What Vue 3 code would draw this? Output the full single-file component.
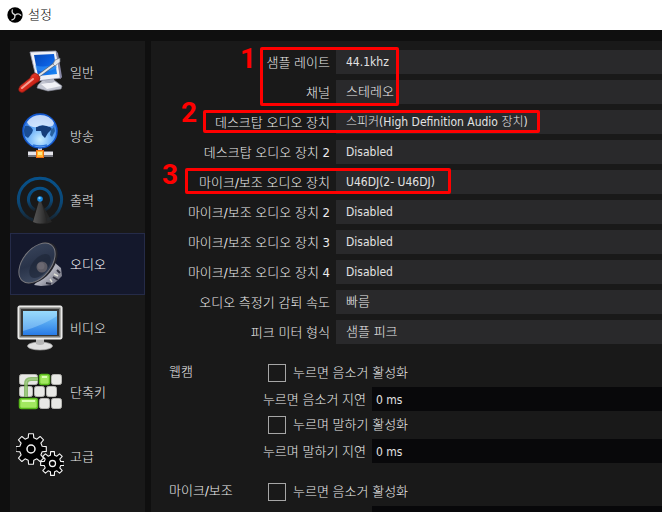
<script setup>
import { ref } from 'vue'

const menu = [
  { id: 'general', label: '일반' },
  { id: 'stream', label: '방송' },
  { id: 'output', label: '출력' },
  { id: 'audio', label: '오디오' },
  { id: 'video', label: '비디오' },
  { id: 'hotkeys', label: '단축키' },
  { id: 'advanced', label: '고급' },
]
const active = ref('audio')

const devices = ref([
  { id: 'rate', label: '샘플 레이트', value: '44.1khz' },
  { id: 'channels', label: '채널', value: '스테레오' },
  { id: 'desktop1', label: '데스크탑 오디오 장치', value: '스피커(High Definition Audio 장치)' },
  { id: 'desktop2', label: '데스크탑 오디오 장치 2', value: 'Disabled' },
  { id: 'mic1', label: '마이크/보조 오디오 장치', value: 'U46DJ(2- U46DJ)' },
  { id: 'mic2', label: '마이크/보조 오디오 장치 2', value: 'Disabled' },
  { id: 'mic3', label: '마이크/보조 오디오 장치 3', value: 'Disabled' },
  { id: 'mic4', label: '마이크/보조 오디오 장치 4', value: 'Disabled' },
  { id: 'decay', label: '오디오 측정기 감퇴 속도', value: '빠름' },
  { id: 'peak', label: '피크 미터 형식', value: '샘플 피크' },
])

const sources = ref([
  { id: 'webcam', label: '웹캠', mute: false, muteDelay: '0 ms', talk: false, talkDelay: '0 ms' },
  { id: 'aux', label: '마이크/보조', mute: false, muteDelay: '0 ms', talk: false, talkDelay: '0 ms' },
])

// values without any latin text use the label size
const isHangul = (text) => /^[가-힣 ]+$/.test(text)

// 8-tooth gear outline centred on 0,0
function gear(outer, inner) {
  const pts = []
  for (let i = 0; i < 8; i++) {
    const a = i * 45
    for (const [d, r] of [[-14, inner], [-9, outer], [9, outer], [14, inner]]) {
      const t = ((a + d) * Math.PI) / 180
      pts.push(`${(r * Math.sin(t)).toFixed(2)},${(-r * Math.cos(t)).toFixed(2)}`)
    }
  }
  return pts.join(' ')
}
</script>

<template>
  <div class="window">
    <header class="titlebar">
      <svg class="logo" viewBox="0 0 16 16" aria-hidden="true">
        <circle cx="8" cy="8" r="7.7" fill="#000" />
        <g fill="none" stroke="#d8d8d8" stroke-width="1.3" stroke-linecap="round">
          <path d="M7.8 7.6C5.6 7 4.6 5.2 5.3 2.9" />
          <path d="M7.8 7.6C5.6 7 4.6 5.2 5.3 2.9" transform="rotate(120 8 8)" />
          <path d="M7.8 7.6C5.6 7 4.6 5.2 5.3 2.9" transform="rotate(240 8 8)" />
        </g>
      </svg>
      <h1>설정</h1>
    </header>

    <div class="body">
      <nav class="sidebar">
        <button
          v-for="item in menu"
          :key="item.id"
          type="button"
          class="menu-item"
          :class="{ active: active === item.id }"
          @click="active = item.id"
        >
          <svg class="icon" viewBox="0 0 48 48" aria-hidden="true">
            <template v-if="item.id === 'general'">
              <defs>
                <linearGradient id="gScreen" x1="0" y1="0" x2="1" y2="1">
                  <stop offset="0" stop-color="#0648b8" /><stop offset=".5" stop-color="#0b5fe0" /><stop offset="1" stop-color="#1f8cf5" />
                </linearGradient>
                <linearGradient id="gHandle" x1="0" y1="0" x2="1" y2="1">
                  <stop offset="0" stop-color="#f0685a" /><stop offset=".5" stop-color="#d92a1c" /><stop offset="1" stop-color="#8c0e08" />
                </linearGradient>
              </defs>
              <path d="M22 37L27 32L38 32L46 38L45 41L32 43L21 40Z" fill="#c2c5d0" stroke="#8c8f9c" stroke-width=".6" />
              <path d="M25 36L39 34L45 38L31 41Z" fill="#f1f2f6" />
              <path d="M28 30L38 29L38 34Q33 36 29 34Z" fill="#b4b7c4" />
              <path d="M14 4L40 3L45 30L21 33Z" fill="#f0f1f7" stroke="#9799ad" stroke-width=".8" />
              <path d="M40 3L42 5L46 29L44 31Z" fill="#8788a6" />
              <path d="M18 7L38 6L41 26L22 28Z" fill="url(#gScreen)" />
              <path d="M19 17Q29 21 40 15L41 20Q30 26 20 22Z" fill="#3aa0ff" opacity=".5" />
              <path d="M21 29L40 15" stroke="#5f6673" stroke-width="3.4" />
              <path d="M21 29L40 15" stroke="#e4e7ec" stroke-width="2" />
              <path d="M37 16L39 12L44 10L44 14L39 18Z" fill="#e4e7ec" stroke="#6e7480" stroke-width=".7" />
              <path d="M4 38L14 30Q15 26 19 25Q23 26 24 30Q24 34 20 35L9 43Q6 46 3 43Q2 41 4 38Z" fill="url(#gHandle)" stroke="#80120c" stroke-width=".6" />
              <path d="M6 40L17 31" stroke="#ffc3b8" stroke-width="2" stroke-linecap="round" opacity=".75" />
            </template>

            <template v-else-if="item.id === 'stream'">
              <defs>
                <radialGradient id="gGlobe" cx=".5" cy=".75" r=".75">
                  <stop offset="0" stop-color="#c9edff" /><stop offset=".5" stop-color="#68adf8" /><stop offset="1" stop-color="#1661dc" />
                </radialGradient>
              </defs>
              <path d="M24 34V42" stroke="#d4d4dc" stroke-width="4" />
              <path d="M12 42H37" stroke="#77777f" stroke-width="6" />
              <path d="M12 41.5H37" stroke="#e4e4ea" stroke-width="3" />
              <rect x="20.5" y="38.5" width="7" height="7" fill="#ffb52e" stroke="#ed6d14" />
              <rect x="22" y="40" width="4" height="3" fill="#ffe68a" />
              <circle cx="24" cy="19" r="17" fill="url(#gGlobe)" stroke="#1357cd" stroke-width="1.5" />
              <path d="M9 14Q14 13 17 18L16 21L12 26L9 24Q7 19 9 14Z" fill="#1a4d94" />
              <path d="M20 15L27 13L34 15L36 17L32 21L29 26L26 23L25 19L20 19Z" fill="#143c7a" />
              <path d="M35 18L38 15L39 19L36 25L34 23Z" fill="#27609f" />
              <path d="M11 10Q16 3 24 3Q34 3 38 11Q37 16 31 14Q24 12 21 15Q13 16 11 10Z" fill="#edf4ff" opacity=".78" />
              <path d="M17 33Q24 35 31 33" stroke="#2f78dc" stroke-width="1.5" fill="none" />
            </template>

            <template v-else-if="item.id === 'output'">
              <defs>
                <linearGradient id="gWave" x1="0" y1="0" x2="0" y2="1">
                  <stop offset="0" stop-color="#07518a" /><stop offset=".6" stop-color="#0b4775" /><stop offset="1" stop-color="#172531" />
                </linearGradient>
                <linearGradient id="gCone" x1="0" y1="0" x2="1" y2="0">
                  <stop offset="0" stop-color="#555" /><stop offset=".5" stop-color="#414141" /><stop offset="1" stop-color="#252525" />
                </linearGradient>
              </defs>
              <g fill="none" stroke="url(#gWave)" stroke-width="3">
                <path d="M17 44A21.5 21.5 0 1 1 31 44" />
                <path d="M19 34A11.5 11.5 0 1 1 29 34" />
              </g>
              <path d="M24 24L36 46Q27 50 17 46Z" fill="#292929" opacity=".8" />
              <path d="M23 25H25L31 46Q24 49 17 46Z" fill="url(#gCone)" />
              <circle cx="24" cy="23" r="2.8" fill="#1688df" />
              <circle cx="23.5" cy="22" r="1.2" fill="#79cdff" />
            </template>

            <template v-else-if="item.id === 'audio'">
              <defs>
                <linearGradient id="gHorn" x1="0" y1="0" x2="1" y2="1">
                  <stop offset="0" stop-color="#3b475e" /><stop offset=".5" stop-color="#293349" /><stop offset="1" stop-color="#46536a" />
                </linearGradient>
                <linearGradient id="gMagnet" x1="0" y1="0" x2="1" y2="1">
                  <stop offset="0" stop-color="#777987" /><stop offset=".5" stop-color="#b2b3be" /><stop offset="1" stop-color="#565766" />
                </linearGradient>
              </defs>
              <path d="M38 22L45 28L46 36L41 41L36 45L25 46L18 45Z" fill="url(#gMagnet)" />
              <path d="M41 30L44 33M37 37L42 40M30 43L35 44" stroke="#30313f" stroke-width="2" />
              <path d="M38 34L42 36M34 39L36 42" stroke="#deded5" stroke-width="1.5" />
              <ellipse cx="22.5" cy="23" rx="15" ry="24" transform="rotate(39 22.5 23)" fill="#24242b" />
              <ellipse cx="21" cy="23" rx="14" ry="23" transform="rotate(39 21 23)" fill="url(#gHorn)" stroke="#77777d" />
              <ellipse cx="24" cy="26" rx="8" ry="14" transform="rotate(39 24 26)" fill="#1d2435" opacity=".6" />
              <circle cx="26" cy="27" r="5.5" fill="#5d5b64" />
              <circle cx="25" cy="26" r="3.5" fill="#74717a" opacity=".6" />
            </template>

            <template v-else-if="item.id === 'video'">
              <defs>
                <linearGradient id="gTv" x1="0" y1="0" x2="0" y2="1">
                  <stop offset="0" stop-color="#80d0fa" /><stop offset="1" stop-color="#287be7" />
                </linearGradient>
              </defs>
              <ellipse cx="24" cy="42" rx="12.5" ry="4" fill="#dedede" stroke="#a3a3a3" stroke-width=".7" />
              <path d="M20 35H28V40Q24 42 20 40Z" fill="#b5b5b5" />
              <rect x="2" y="2" width="44" height="33" rx="1.5" fill="#e0e0dd" stroke="#f7f7f7" />
              <rect x="3.5" y="3.5" width="41" height="30" fill="#7b7b79" />
              <rect x="5" y="5" width="38" height="27" fill="#373736" />
              <rect x="7" y="7" width="34" height="24" fill="url(#gTv)" />
              <path d="M7 7H41V12Q28 21 7 27Z" fill="#c6efff" opacity=".35" />
            </template>

            <template v-else-if="item.id === 'hotkeys'">
              <g fill="#e8e8e5" stroke="#b5b5b1">
                <rect x="3.5" y="6.5" width="18" height="10" rx="2" />
                <rect x="35.5" y="6.5" width="10" height="10" rx="2" />
                <rect x="3.5" y="18.5" width="13" height="10" rx="2" />
                <rect x="18.5" y="18.5" width="10" height="10" rx="2" />
                <rect x="30.5" y="18.5" width="10" height="10" rx="2" />
                <rect x="23.5" y="30.5" width="10" height="10" rx="2" />
                <rect x="35.5" y="30.5" width="10" height="10" rx="2" />
              </g>
              <g fill="#a2e860" stroke="#58b91b" stroke-width="1.5">
                <rect x="23.5" y="6.5" width="10" height="10" rx="2" />
                <rect x="3.5" y="30.5" width="18" height="10" rx="2" />
              </g>
              <path d="M10 29V16Q10 11 15 11H22" fill="none" stroke="#71ae4a" stroke-width="4" opacity=".75" />
              <path d="M10 29V16Q10 11 15 11H22" fill="none" stroke="#a9d38c" stroke-width="1" />
              <path d="M6 33H19M26 9H31" stroke="#dbffb6" stroke-width="2" />
            </template>

            <template v-else>
              <g fill="#000" stroke="#f4f4f4" stroke-width="1.1" stroke-linejoin="round">
                <g transform="translate(15 17)">
                  <polygon :points="gear(15.5, 11.5)" />
                  <circle r="4" stroke-width="1.5" />
                </g>
                <g transform="translate(36.5 31.5)">
                  <polygon :points="gear(12, 8.5)" />
                  <circle r="3" stroke-width="1.3" />
                </g>
              </g>
            </template>
          </svg>
          <span>{{ item.label }}</span>
        </button>
      </nav>

      <main class="panel">
        <section class="devices">
          <div v-for="row in devices" :key="row.id" class="device-row">
            <label :for="row.id">{{ row.label }}</label>
            <select :id="row.id" v-model="row.value" :class="{ hangul: isHangul(row.value) }">
              <option :value="row.value">{{ row.value }}</option>
            </select>
          </div>
        </section>

        <section v-for="src in sources" :key="src.id" class="source">
          <h2>{{ src.label }}</h2>
          <div class="source-fields">
            <label class="check"><input v-model="src.mute" type="checkbox" />누르면 음소거 활성화</label>
            <div class="delay-row">
              <label :for="src.id + '-mute'">누르면 음소거 지연</label>
              <input :id="src.id + '-mute'" v-model="src.muteDelay" type="text" />
            </div>
            <label class="check"><input v-model="src.talk" type="checkbox" />누르며 말하기 활성화</label>
            <div class="delay-row">
              <label :for="src.id + '-talk'">누르며 말하기 지연</label>
              <input :id="src.id + '-talk'" v-model="src.talkDelay" type="text" />
            </div>
          </div>
        </section>
      </main>
    </div>

    <!-- numbered callouts over the form -->
    <div class="mark mark-1"></div>
    <div class="mark mark-2"></div>
    <div class="mark mark-3"></div>
    <b class="num num-1">1</b>
    <b class="num num-2">2</b>
    <b class="num num-3">3</b>
  </div>
</template>

<style>
body { margin: 0; background: #0f0f0f; }
</style>

<style scoped>
.window {
  position: relative;
  height: 100vh;
  display: flex;
  flex-direction: column;
  overflow: hidden;
  background: #0f0f0f;
  color: #ececec;
  font: 300 13px/26px "DejaVu Sans Condensed", "Noto Sans CJK KR", sans-serif;
}
h1, h2 { margin: 0; font: inherit; }
.titlebar { display: flex; align-items: center; gap: 5px; flex: none; height: 30px; padding: 0 7px; background: #fff; color: #000; }
.logo { width: 16px; height: 16px; }

.body { flex: 1; display: flex; gap: 6px; min-height: 0; padding: 11px 0 0 10px; }
.sidebar { flex: none; display: flex; flex-direction: column; gap: 2px; width: 135px; background: #191919; }
.menu-item {
  display: flex;
  align-items: center;
  gap: 6px;
  flex: none;
  height: 62px;
  padding: 0 5px;
  border: 1px solid transparent;
  background: none;
  color: inherit;
  font: inherit;
}
.menu-item span { padding-top: 2px; }
.menu-item.active { background: #14182c; border-color: #252b48; color: #fff; }
.icon { flex: none; width: 48px; height: 48px; }

.panel { flex: 1; min-width: 0; padding-top: 9px; background: #191919; }
.devices { display: flex; flex-direction: column; gap: 6px; }
.device-row { display: grid; grid-template-columns: 179px 1fr; gap: 6px; height: 24px; text-align: right; }
select, .delay-row input {
  appearance: none;
  box-sizing: border-box;
  width: 100%;
  height: 24px;
  border: 0;
  border-radius: 0;
  color: #e2e2e2;
  font: inherit;
  font-size: 12px;
}
select { padding: 0 10px; background: #29292b; line-height: 24px; }
select.hangul { font-size: 13px; color: #ececec; }

.source { display: grid; grid-template-columns: 92px 1fr; margin-top: 17px; }
.source h2 { padding-left: 18px; line-height: 22px; white-space: nowrap; }
.source-fields { display: flex; flex-direction: column; gap: 2px; }
.check { display: flex; align-items: center; gap: 7px; height: 24px; padding-left: 25px; }
.check input { appearance: none; box-sizing: border-box; width: 18px; height: 18px; margin: 0; border: 1px solid #a6a6a6; background: #191919; }
.check input:checked { background: #a6a6a6; }
.delay-row { display: grid; grid-template-columns: 123px 1fr; gap: 6px; height: 24px; text-align: right; }
.delay-row input { padding: 2px 4px 0; background: #08080a; }

.mark { position: absolute; box-sizing: border-box; border: 3px solid #f00; border-radius: 2px; pointer-events: none; }
.mark-1 { left: 260px; top: 47px; width: 139px; height: 59px; }
.mark-2 { left: 203px; top: 110px; width: 337px; height: 23px; }
.mark-3 { left: 185px; top: 168px; width: 266px; height: 26px; }
.num { position: absolute; color: #f00; font: 700 28px/28px Roboto, sans-serif; pointer-events: none; }
.num-1 { left: 240px; top: 45px; }
.num-2 { left: 181px; top: 99px; }
.num-3 { left: 162px; top: 161px; }
</style>
